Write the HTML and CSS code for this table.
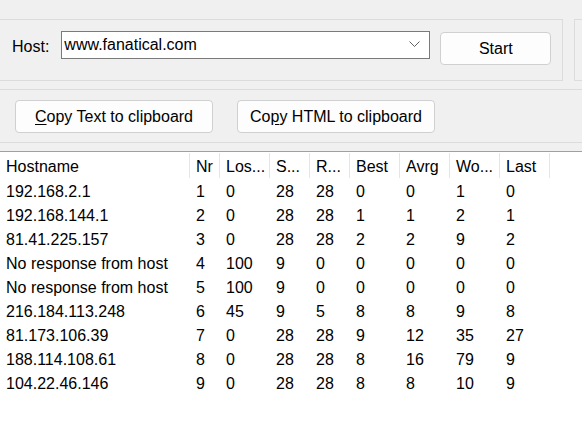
FILE: index.html
```html
<!DOCTYPE html>
<html>
<head>
<meta charset="utf-8">
<link rel="stylesheet" href="styles.css">
</head>
<body>
<div class="top">
  <div class="hostrow">
    <div class="group host-group">
      <span class="host-label">Host:</span>
      <div class="combo">
        <span class="combo-text">www.fanatical.com</span>
        <svg class="chev" width="11" height="7" viewBox="0 0 11 7"><polyline points="0.5,0.5 5.5,5.5 10.5,0.5" fill="none" stroke="#606060" stroke-width="1"/></svg>
      </div>
      <button class="btn start">Start</button>
    </div>
    <div class="group side-group"></div>
  </div>
  <div class="group copy-group">
    <button class="btn copy"><u>C</u>opy Text to clipboard</button>
    <button class="btn copy">Co<u>p</u>y HTML to clipboard</button>
  </div>
</div>
<div class="list">
  <table>
    <colgroup>
      <col class="c-host"><col class="c-nr"><col class="c-w50"><col class="c-w40"><col class="c-w40"><col class="c-w50"><col class="c-w50"><col class="c-w50"><col class="c-w50"><col>
    </colgroup>
    <thead>
      <tr><th>Hostname</th><th>Nr</th><th>Los...</th><th>S...</th><th>R...</th><th>Best</th><th>Avrg</th><th>Wo...</th><th>Last</th><th class="fill"></th></tr>
    </thead>
    <tbody>
      <tr><td>192.168.2.1</td><td>1</td><td>0</td><td>28</td><td>28</td><td>0</td><td>0</td><td>1</td><td>0</td><td></td></tr>
      <tr><td>192.168.144.1</td><td>2</td><td>0</td><td>28</td><td>28</td><td>1</td><td>1</td><td>2</td><td>1</td><td></td></tr>
      <tr><td>81.41.225.157</td><td>3</td><td>0</td><td>28</td><td>28</td><td>2</td><td>2</td><td>9</td><td>2</td><td></td></tr>
      <tr><td>No response from host</td><td>4</td><td>100</td><td>9</td><td>0</td><td>0</td><td>0</td><td>0</td><td>0</td><td></td></tr>
      <tr><td>No response from host</td><td>5</td><td>100</td><td>9</td><td>0</td><td>0</td><td>0</td><td>0</td><td>0</td><td></td></tr>
      <tr><td>216.184.113.248</td><td>6</td><td>45</td><td>9</td><td>5</td><td>8</td><td>8</td><td>9</td><td>8</td><td></td></tr>
      <tr><td>81.173.106.39</td><td>7</td><td>0</td><td>28</td><td>28</td><td>9</td><td>12</td><td>35</td><td>27</td><td></td></tr>
      <tr><td>188.114.108.61</td><td>8</td><td>0</td><td>28</td><td>28</td><td>8</td><td>16</td><td>79</td><td>9</td><td></td></tr>
      <tr><td>104.22.46.146</td><td>9</td><td>0</td><td>28</td><td>28</td><td>8</td><td>8</td><td>10</td><td>9</td><td></td></tr>
    </tbody>
  </table>
</div>
</body>
</html>
```

FILE: styles.css
```css
html, body {
  margin: 0;
  padding: 0;
}
body {
  width: 582px;
  height: 430px;
  overflow: hidden;
  background: #ffffff;
  font-family: "Liberation Sans", Arial, sans-serif;
  font-size: 16px;
  color: #000;
}
.top {
  background: #f0f0f0;
  padding-top: 19px;
  padding-bottom: 8px;
}
.hostrow {
  display: flex;
  height: 62px;
}
.group {
  border: 1px solid #dcdcdc;
  box-sizing: border-box;
}
.host-group {
  width: 563px;
  border-left: none;
  display: flex;
  align-items: flex-start;
}
.side-group {
  flex: 1;
  margin-left: 11px;
  border-right: none;
}
.host-label {
  margin-left: 12px;
  margin-top: 18px;
  line-height: 18px;
}
.combo {
  margin-left: 12px;
  margin-top: 11px;
  width: 369px;
  height: 28px;
  box-sizing: border-box;
  border: 1px solid #7a7a7a;
  background: #fff;
  display: flex;
  align-items: center;
  padding-left: 2px;
  padding-right: 9px;
}
.combo-text {
  flex: 1;
  line-height: 18px;
}
.chev {
  display: block;
  margin-top: -2px;
}
.btn {
  font-family: inherit;
  font-size: 16px;
  color: #000;
  background: #fdfdfd;
  border: 1px solid #d0d0d0;
  border-radius: 4px;
  height: 33px;
  padding: 0;
  box-sizing: border-box;
  line-height: 18px;
}
.btn u {
  text-underline-offset: 2px;
}
.start {
  width: 111px;
  margin-left: 10px;
  margin-top: 12px;
}
.copy-group {
  margin-top: 8px;
  height: 54px;
  border-left: none;
  border-right: none;
  display: flex;
  align-items: flex-start;
  padding-top: 10px;
  padding-left: 15px;
  gap: 24px;
}
.copy {
  width: 198px;
}
.list {
  border-top: 1px solid #a0a0a0;
  background: #fff;
}
table {
  border-collapse: collapse;
  table-layout: fixed;
  width: 582px;
}
.c-host { width: 190px; }
.c-nr { width: 30px; }
.c-w40 { width: 40px; }
.c-w50 { width: 50px; }
th, td {
  box-sizing: border-box;
  text-align: left;
  font-weight: normal;
  white-space: nowrap;
  overflow: hidden;
  vertical-align: top;
  line-height: 18px;
}
th {
  height: 26px;
  padding: 6px 0 2px 6px;
  background-image: linear-gradient(#e5e5e5, #e5e5e5);
  background-size: 1px 25px;
  background-position: right 1px;
  background-repeat: no-repeat;
}
th.fill {
  background: none;
}
td {
  height: 24px;
  padding: 5px 0 1px 6px;
}
```
